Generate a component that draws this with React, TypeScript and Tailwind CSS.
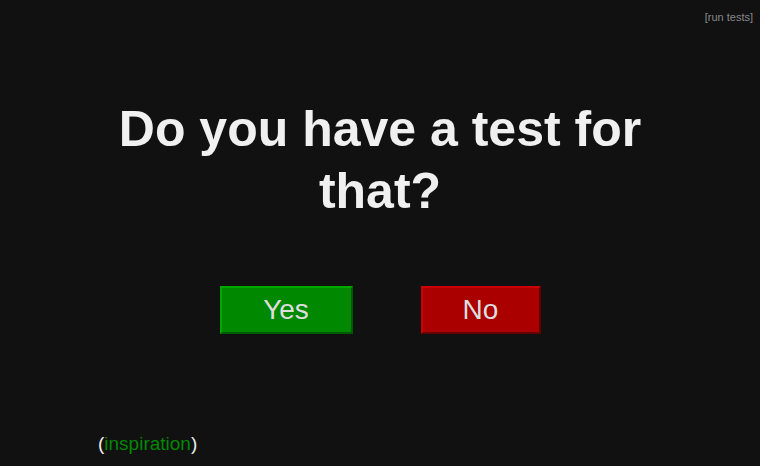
import React from "react";

export default function App() {
  return (
    <div className="relative flex h-[466px] w-full flex-col bg-[#111111] font-['Liberation_Sans',Arial,sans-serif] text-[#eeeeee]">
      <a className="absolute right-[7px] top-[9px] text-[11px] text-[#888888]">[run tests]</a>

      <h1 className="mx-auto mt-[98px] w-[580px] text-center text-[50px] font-bold leading-[62px] text-[#f0f0f0]">
        Do you have a test for that?
      </h1>

      <div className="mt-[64px] flex justify-center gap-[68px]">
        <button className="h-[48px] w-[133px] border-2 border-b-[#005a00] border-l-[#00a800] border-r-[#005a00] border-t-[#00a800] bg-[#008800] text-[28px] text-[#dddddd]">
          Yes
        </button>
        <button className="h-[48px] w-[120px] border-2 border-b-[#660000] border-l-[#cc0000] border-r-[#660000] border-t-[#cc0000] bg-[#aa0000] text-[28px] text-[#dddddd]">
          No
        </button>
      </div>

      <p className="mt-auto mb-[8px] ml-[98px] text-[19px] text-[#eeeeee]">
        (<a className="text-[#008800]">inspiration</a>)
      </p>
    </div>
  );
}
